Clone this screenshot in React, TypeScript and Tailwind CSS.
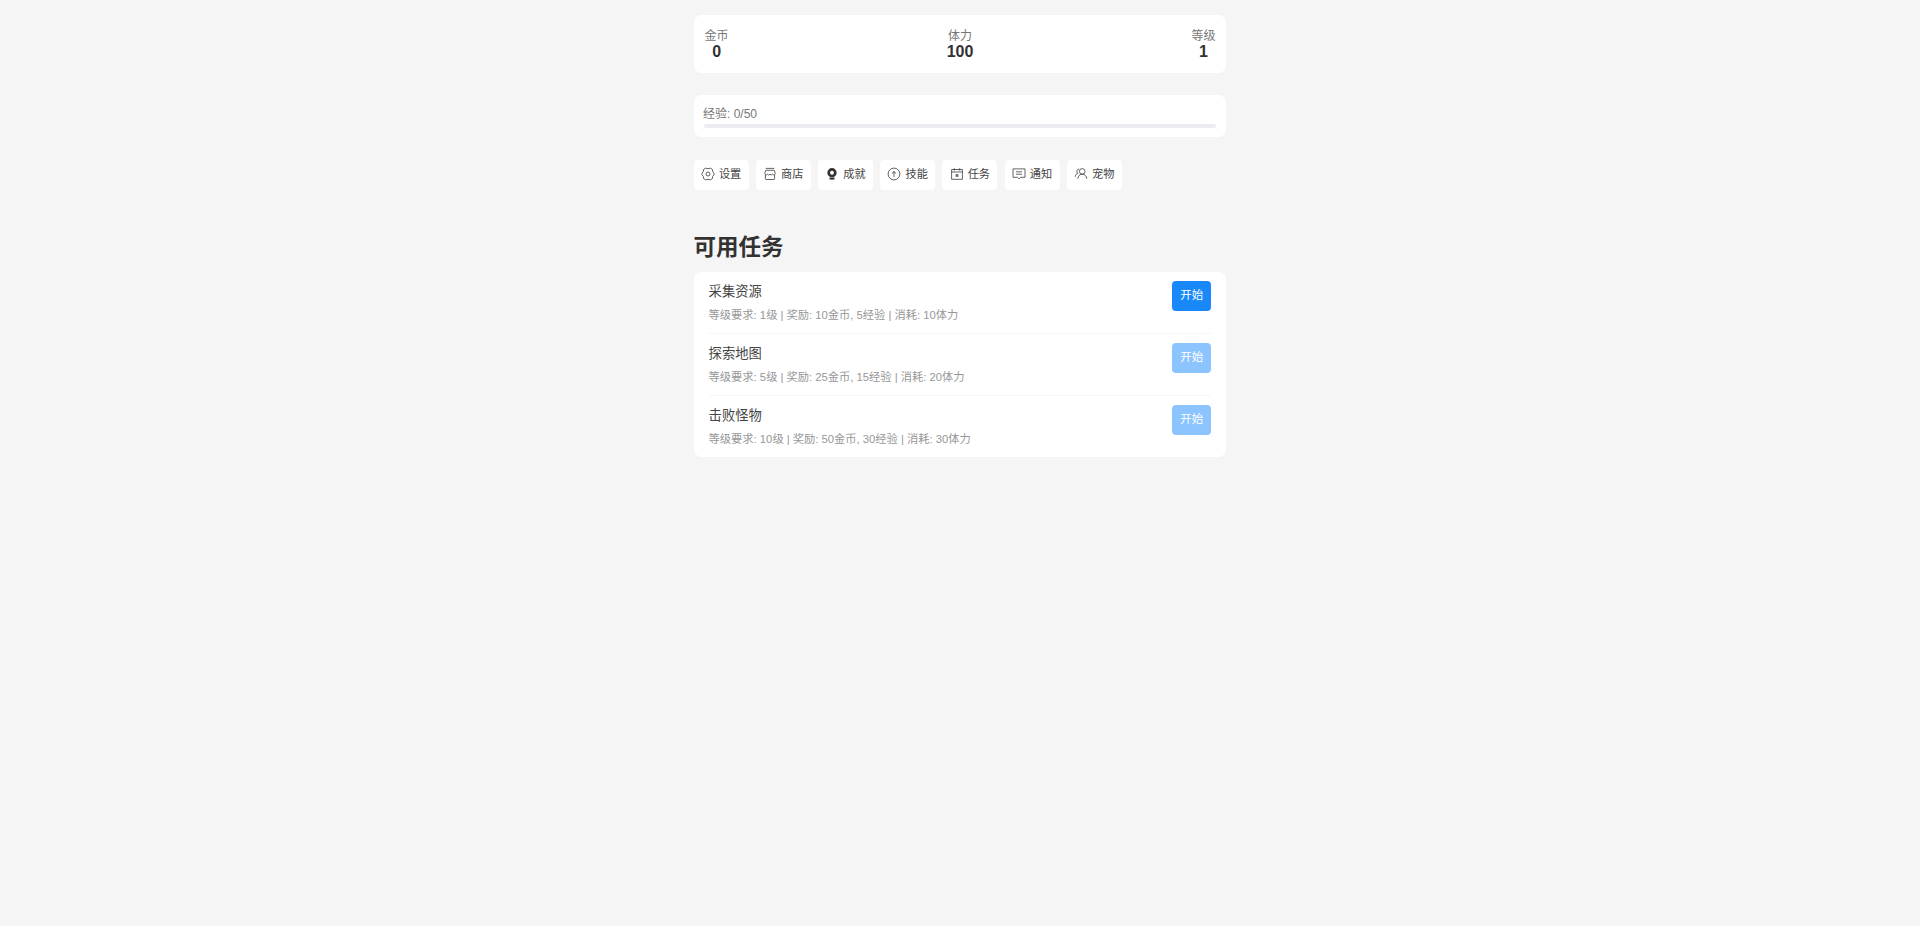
import type { ReactNode } from 'react';

type Task = {
  id: number;
  name: string;
  level: number;
  gold: number;
  exp: number;
  cost: number;
};

const TASKS: Task[] = [
  { id: 1, name: '采集资源', level: 1, gold: 10, exp: 5, cost: 10 },
  { id: 2, name: '探索地图', level: 5, gold: 25, exp: 15, cost: 20 },
  { id: 3, name: '击败怪物', level: 10, gold: 50, exp: 30, cost: 30 },
];

const player = { gold: 0, energy: 100, level: 1, exp: 0, expToNext: 50 };

function Icon({ children }: { children: ReactNode }) {
  return (
    <svg
      className="size-[14px] shrink-0 text-[#323233]"
      viewBox="0 0 14 14"
      fill="none"
      stroke="currentColor"
      strokeWidth="0.75"
      strokeLinejoin="round"
    >
      {children}
    </svg>
  );
}

const MENU = [
  {
    label: '设置',
    icon: (
      <Icon>
        <path d="M4.5 1.2Q7 2.2 9.5 1.2L11.3 2.3Q11.2 4.8 13 6.2V7.8Q11.2 9.2 11.3 11.7L9.5 12.8Q7 11.8 4.5 12.8L2.7 11.7Q2.8 9.2 1 7.8V6.2Q2.8 4.8 2.7 2.3z" />
        <circle cx="7" cy="7" r="2" />
      </Icon>
    ),
  },
  {
    label: '商店',
    icon: (
      <Icon>
        <path d="M2.7 1.4h8.6M2.8 3.3h8.4l1 2.7v.6a1.4 1.4 0 0 1-2.6.6 1.6 1.6 0 0 1-2.6 0 1.6 1.6 0 0 1-2.6 0 1.4 1.4 0 0 1-2.6-.6V6zM2.4 7.8v4q0 .7.7.7h7.8q.7 0 .7-.7v-4" />
      </Icon>
    ),
  },
  {
    label: '成就',
    icon: (
      <Icon>
        <circle cx="7" cy="5.7" r="3.3" strokeWidth="2.7" />
        <path d="M4.5 10.6h5v2.2l-1.2-.6-1.3.7-1.3-.7-1.2.6z" fill="currentColor" stroke="none" />
      </Icon>
    ),
  },
  {
    label: '技能',
    icon: (
      <Icon>
        <circle cx="7" cy="7" r="5.9" />
        <path d="M7 10V4.5M4.9 6.5 7 4.5l2.1 2" />
      </Icon>
    ),
  },
  {
    label: '任务',
    icon: (
      <Icon>
        <path d="M1.6 2.5h10.8v9.8H1.6zM1.6 5h10.8M4.3 1.2v2.4M9.7 1.2v2.4" />
        <path d="M5.6 7.1h2.8v2.8H5.6z" fill="currentColor" stroke="none" opacity="0.7" />
      </Icon>
    ),
  },
  {
    label: '通知',
    icon: (
      <Icon>
        <path d="M1 1.9h12v8.4H8.6L7 11.9l-1.6-1.6H1zM4 4.8h6M4 7.2h6" />
      </Icon>
    ),
  },
  {
    label: '宠物',
    icon: (
      <Icon>
        <circle cx="8.2" cy="4.4" r="2.8" />
        <path d="M3.8 11.8c.2-2.7 1.8-4.6 4.4-4.6s4.3 1.9 4.6 4.6M5.1 2a2.4 2.4 0 0 0-1.3 4.3M1.2 9.8c.2-2 1.1-3.1 2.6-3.5" />
      </Icon>
    ),
  },
];

function Stat({ label, value }: { label: string; value: number }) {
  return (
    <div className="flex flex-col items-center">
      <span className="text-[12px] leading-[16px] text-[#777]">{label}</span>
      <span className="text-[16px] leading-[16px] font-bold text-[#323233]">{value}</span>
    </div>
  );
}

function TaskRow({ task, last }: { task: Task; last: boolean }) {
  const locked = player.level < task.level;

  return (
    <div
      className={`flex items-start justify-between pt-[9px] ${
        last ? 'h-[61.6px]' : 'h-[61.8px] border-b border-[#f6f6f7]'
      }`}
    >
      <div>
        <p className="text-[13.3px] leading-[22px] text-[#444]">{task.name}</p>
        <p className="mt-[3px] text-[11.26px] leading-[18px] text-[#969799]">
          等级要求: {task.level}级 | 奖励: {task.gold}金币, {task.exp}经验 | 消耗: {task.cost}体力
        </p>
      </div>
      <button
        disabled={locked}
        className={`h-[30px] w-[39.4px] rounded-[4px] pb-px text-[11.4px] text-white ${
          locked ? 'bg-[#8cc4ff]' : 'bg-[#1989fa]'
        }`}
      >
        开始
      </button>
    </div>
  );
}

export default function App() {
  return (
    <div className="min-h-screen bg-[#f5f5f5] pt-[15px] font-['Liberation_Sans','Noto_Sans_CJK_SC',sans-serif] text-[#323233]">
      <div className="mx-auto w-[532.8px]">
        {/* Player stats */}
        <section className="flex h-[58px] items-start justify-between rounded-[8px] bg-white px-[11px] pt-[13px]">
          <Stat label="金币" value={player.gold} />
          <Stat label="体力" value={player.energy} />
          <Stat label="等级" value={player.level} />
        </section>

        {/* Experience */}
        <section className="mt-[22px] h-[42px] rounded-[8px] bg-white px-[9.4px] pt-[11px]">
          <p className="text-[12px] leading-[16px] text-[#777]">
            经验: {player.exp}/{player.expToNext}
          </p>
          <div className="mx-[0.6px] mt-[2px] h-[4px] overflow-hidden rounded-full bg-[#ebedf0]">
            <div className="h-full bg-[#1989fa]" style={{ width: `${(player.exp / player.expToNext) * 100}%` }} />
          </div>
        </section>

        <nav className="mt-[22.6px] flex gap-[7.2px]">
          {MENU.map(({ label, icon }) => (
            <button
              key={label}
              className="flex h-[30px] w-[55px] items-center justify-center gap-[4px] rounded-[4px] bg-white pb-[1.4px] text-[11.2px] text-[#444]"
            >
              {icon}
              <span>{label}</span>
            </button>
          ))}
        </nav>

        <h2 className="mt-[42.4px] text-[22.5px] leading-[32px] font-bold">可用任务</h2>

        <section className="mt-[8px] rounded-[8px] bg-white px-[15px]">
          {TASKS.map((task, i) => (
            <TaskRow key={task.id} task={task} last={i === TASKS.length - 1} />
          ))}
        </section>
      </div>
    </div>
  );
}
